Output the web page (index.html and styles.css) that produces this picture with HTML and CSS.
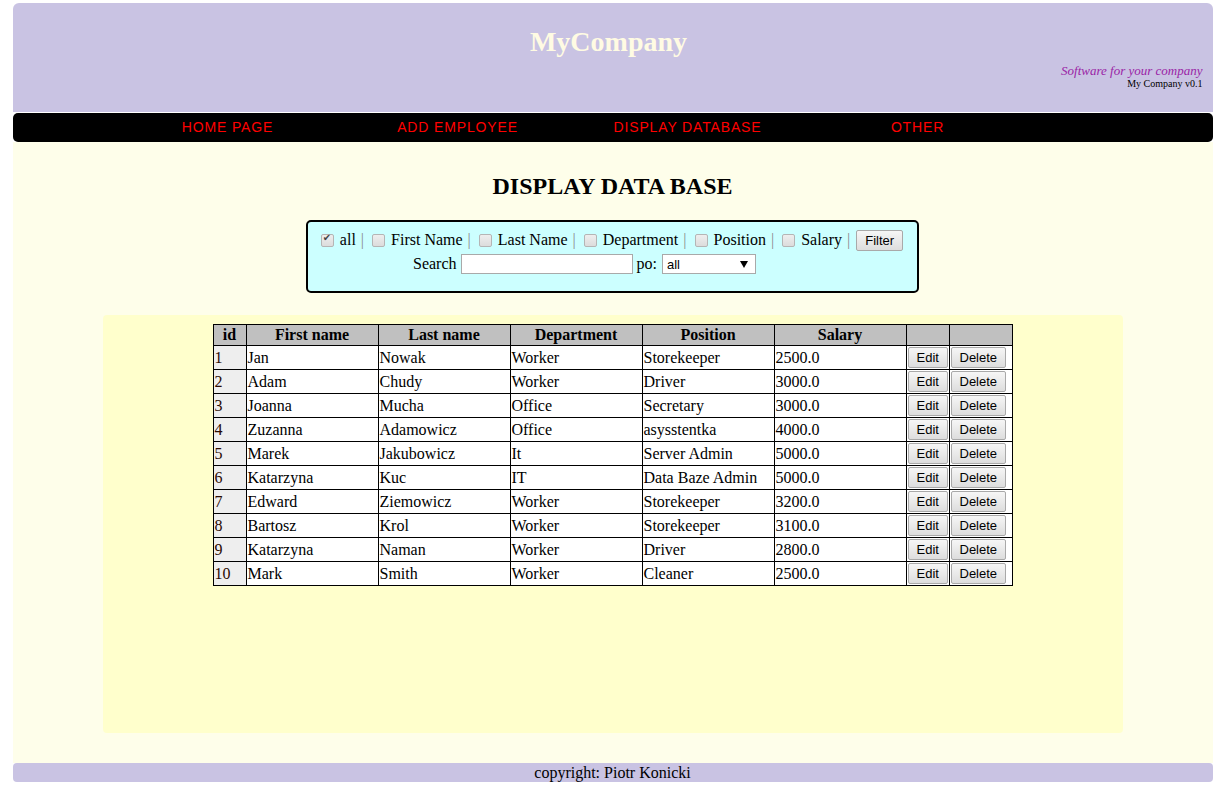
FILE: index.html
```html
<!DOCTYPE html>
<html lang="en">
<head>
<meta charset="utf-8">
<title>MyCompany - Display Data Base</title>
<link rel="stylesheet" href="styles.css">
</head>
<body>
<div class="page">
  <header class="header">
    <h1 class="logo">MyCompany</h1>
    <p class="tagline">Software for your company</p>
    <p class="version">My Company v0.1</p>
  </header>
  <nav class="nav">
    <ul class="menu">
      <li><a href="#">HOME PAGE</a></li>
      <li><a href="#">ADD EMPLOYEE</a></li>
      <li><a href="#">DISPLAY DATABASE</a></li>
      <li><a href="#">OTHER</a></li>
    </ul>
  </nav>
  <main class="main">
    <h2 class="title">DISPLAY DATA BASE</h2>
    <form class="filter">
      <div class="filter-row row-opts">
        <label class="opt"><input type="checkbox" class="cb" checked>all</label><span class="sep">|</span>
        <label class="opt"><input type="checkbox" class="cb">First Name</label><span class="sep">|</span>
        <label class="opt"><input type="checkbox" class="cb">Last Name</label><span class="sep">|</span>
        <label class="opt"><input type="checkbox" class="cb">Department</label><span class="sep">|</span>
        <label class="opt"><input type="checkbox" class="cb">Position</label><span class="sep">|</span>
        <label class="opt"><input type="checkbox" class="cb">Salary</label><span class="sep">|</span>
        <button type="button" class="btn filter-btn">Filter</button>
      </div>
      <div class="filter-row row-search">
        <span class="lbl">Search</span>
        <input type="text" class="search">
        <span class="lbl">po:</span>
        <span class="select-wrap"><select class="select"><option>all</option></select><svg class="arrow" width="8" height="7" viewBox="0 0 8 7"><path d="M0 0 H8 L4 7 Z" fill="#000"/></svg></span>
      </div>
    </form>
    <section class="panel">
      <table class="data">
        <colgroup>
          <col class="c-id"><col class="c-txt"><col class="c-txt"><col class="c-txt"><col class="c-txt"><col class="c-txt"><col class="c-edit"><col class="c-del">
        </colgroup>
        <thead>
          <tr><th>id</th><th>First name</th><th>Last name</th><th>Department</th><th>Position</th><th>Salary</th><th></th><th></th></tr>
        </thead>
        <tbody>
          <tr><td class="id">1</td><td>Jan</td><td>Nowak</td><td>Worker</td><td>Storekeeper</td><td>2500.0</td><td class="act"><button class="btn">Edit</button></td><td class="act"><button class="btn">Delete</button></td></tr>
          <tr><td class="id">2</td><td>Adam</td><td>Chudy</td><td>Worker</td><td>Driver</td><td>3000.0</td><td class="act"><button class="btn">Edit</button></td><td class="act"><button class="btn">Delete</button></td></tr>
          <tr><td class="id">3</td><td>Joanna</td><td>Mucha</td><td>Office</td><td>Secretary</td><td>3000.0</td><td class="act"><button class="btn">Edit</button></td><td class="act"><button class="btn">Delete</button></td></tr>
          <tr><td class="id">4</td><td>Zuzanna</td><td>Adamowicz</td><td>Office</td><td>asysstentka</td><td>4000.0</td><td class="act"><button class="btn">Edit</button></td><td class="act"><button class="btn">Delete</button></td></tr>
          <tr><td class="id">5</td><td>Marek</td><td>Jakubowicz</td><td>It</td><td>Server Admin</td><td>5000.0</td><td class="act"><button class="btn">Edit</button></td><td class="act"><button class="btn">Delete</button></td></tr>
          <tr><td class="id">6</td><td>Katarzyna</td><td>Kuc</td><td>IT</td><td>Data Baze Admin</td><td>5000.0</td><td class="act"><button class="btn">Edit</button></td><td class="act"><button class="btn">Delete</button></td></tr>
          <tr><td class="id">7</td><td>Edward</td><td>Ziemowicz</td><td>Worker</td><td>Storekeeper</td><td>3200.0</td><td class="act"><button class="btn">Edit</button></td><td class="act"><button class="btn">Delete</button></td></tr>
          <tr><td class="id">8</td><td>Bartosz</td><td>Krol</td><td>Worker</td><td>Storekeeper</td><td>3100.0</td><td class="act"><button class="btn">Edit</button></td><td class="act"><button class="btn">Delete</button></td></tr>
          <tr><td class="id">9</td><td>Katarzyna</td><td>Naman</td><td>Worker</td><td>Driver</td><td>2800.0</td><td class="act"><button class="btn">Edit</button></td><td class="act"><button class="btn">Delete</button></td></tr>
          <tr><td class="id">10</td><td>Mark</td><td>Smith</td><td>Worker</td><td>Cleaner</td><td>2500.0</td><td class="act"><button class="btn">Edit</button></td><td class="act"><button class="btn">Delete</button></td></tr>
        </tbody>
      </table>
    </section>
  </main>
  <footer class="footer">copyright: Piotr Konicki</footer>
</div>
</body>
</html>
```

FILE: styles.css
```css
html, body {
  margin: 0;
  padding: 0;
  background: #ffffff;
}
body {
  padding-top: 3px;
  font-family: "Liberation Serif", "Times New Roman", serif;
  font-size: 16px;
  color: #000;
}
.page {
  width: 1200px;
  margin: 0 auto;
  padding-left: 1px;
}

/* Header */
.header {
  height: 109px;
  background: #c9c3e3;
  border-radius: 6px 6px 0 0;
  padding: 23px 10px 0 10px;
  box-sizing: border-box;
}
.logo {
  margin: 0;
  padding-right: 8px;
  text-align: center;
  color: #fffbe3;
  font-size: 28px;
  line-height: 32px;
  font-weight: bold;
}
.tagline {
  margin: 6px 0 0 0;
  text-align: right;
  font-style: italic;
  color: #9a1fa6;
  font-size: 13px;
  line-height: 14px;
}
.version {
  margin: 0;
  text-align: right;
  font-size: 10px;
  line-height: 12px;
  color: #000;
}

/* Nav */
.nav {
  margin-top: 1px;
  height: 29px;
  background: #000;
  border-radius: 5px;
}
.menu {
  list-style: none;
  margin: 0;
  padding: 0 0 0 100px;
  display: flex;
}
.menu li {
  width: 230px;
  text-align: center;
}
.menu a {
  display: block;
  line-height: 29px;
  color: #ff0000;
  text-decoration: none;
  font-family: "Liberation Sans", Arial, sans-serif;
  font-size: 14px;
  letter-spacing: 0.85px;
}

/* Main */
.main {
  background: #fefeea;
  height: 621px;
  box-sizing: border-box;
  padding-top: 30px;
  display: flex;
  flex-direction: column;
  align-items: center;
}
.title {
  margin: 0;
  font-size: 24px;
  line-height: 28px;
  font-weight: bold;
}

/* Filter */
.filter {
  margin-top: 20px;
  width: 609px;
  background: #ccffff;
  border: 2px solid #000;
  border-radius: 5px;
  padding: 6px 0 15px 0;
  display: flex;
  flex-direction: column;
}
.filter-row {
  height: 24px;
  display: flex;
  align-items: center;
  justify-content: center;
  white-space: nowrap;
}
.row-opts {
  padding-right: 6px;
}
.row-search {
  padding-right: 60px;
}
.opt {
  display: inline-flex;
  align-items: center;
}
.sep {
  color: #8a8a8a;
  margin: 0 3px 0 5px;
}
.cb {
  -webkit-appearance: none;
  appearance: none;
  width: 13px;
  height: 13px;
  margin: 0 6px 0 5px;
  border: 1px solid #b5b5b5;
  border-radius: 2px;
  background: linear-gradient(#eeeeee, #dcdcdc);
  box-sizing: border-box;
  position: relative;
}
.cb:checked::after {
  content: "✔";
  position: absolute;
  left: 1px;
  top: -3px;
  font-family: "DejaVu Sans", sans-serif;
  font-size: 10px;
  color: #444;
}
.btn {
  font-family: "Liberation Sans", Arial, sans-serif;
  font-size: 13px;
  color: #000;
  background: linear-gradient(#f6f6f6, #dddddd);
  border: 1px solid #a9a9a9;
  border-radius: 2px;
  padding: 1px 8px;
  height: 21px;
  line-height: 17px;
}
.filter-btn {
  margin-left: 3px;
}
.lbl {
  margin: 0 4px;
}
.search {
  width: 172px;
  height: 20px;
  box-sizing: border-box;
  border: 1px solid #a9a9a9;
  background: #fff;
  padding: 0 2px;
  margin: 0;
}
.select-wrap {
  position: relative;
  display: block;
  margin-left: 1px;
  height: 20px;
}
.select {
  -webkit-appearance: none;
  appearance: none;
  width: 94px;
  height: 20px;
  box-sizing: border-box;
  border: 1px solid #a9a9a9;
  background: #fff;
  font-family: "Liberation Sans", Arial, sans-serif;
  font-size: 13px;
  padding: 0 4px;
  margin: 0;
  border-radius: 0;
  display: block;
}
.arrow {
  position: absolute;
  right: 8px;
  top: 7px;
  pointer-events: none;
}

/* Panel & table */
.panel {
  margin-top: 22px;
  width: 1020px;
  height: 418px;
  box-sizing: border-box;
  background: #ffffcc;
  border-radius: 4px;
  padding-top: 9px;
  display: flex;
  justify-content: center;
  align-items: flex-start;
}
.data {
  border-collapse: collapse;
  table-layout: fixed;
  width: 800px;
  background: #fff;
}
.c-id { width: 33px; }
.c-txt { width: 132px; }
.c-edit { width: 43px; }
.c-del { width: 63px; }
.data th, .data td {
  border: 1px solid #000;
  padding: 0 1px;
  text-align: left;
  white-space: nowrap;
  overflow: hidden;
}
.data th {
  background: #c0c0c0;
  text-align: center;
  font-weight: bold;
  height: 19px;
  line-height: 18px;
  padding-bottom: 1px;
}
.data td {
  height: 23px;
  line-height: 20px;
}
.data td.id {
  background: #eeeeee;
  color: #2a0a00;
}
.data td.act {
  padding: 0 1px;
}

/* Footer */
.footer {
  height: 19px;
  line-height: 19px;
  background: #c9c3e3;
  border-radius: 4px;
  text-align: center;
  font-size: 16px;
}
```
